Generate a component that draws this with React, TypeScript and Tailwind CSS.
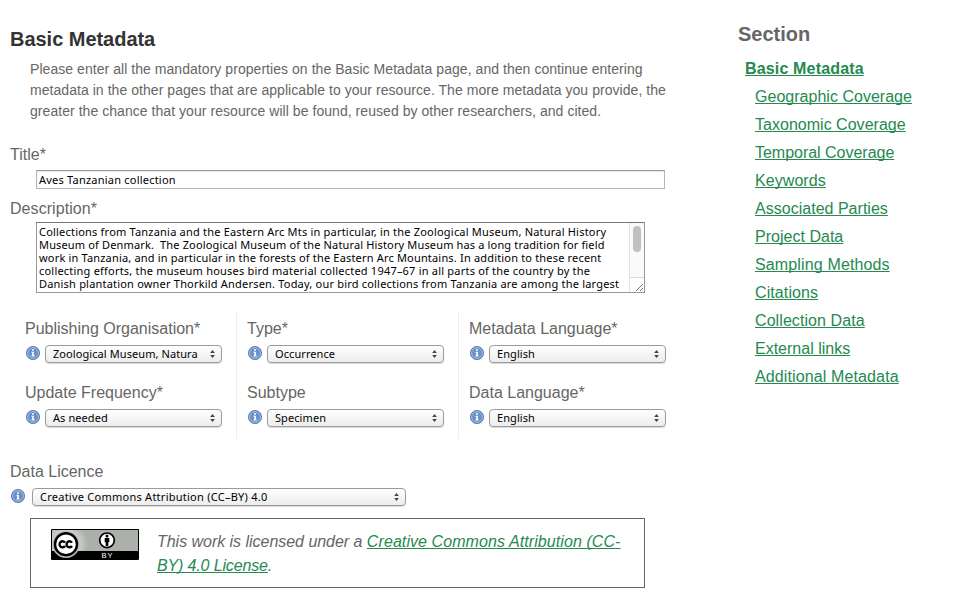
import type { ReactNode } from 'react';

const sections = [
  { name: 'Geographic Coverage', tracking: 'tracking-[0.02px]' },
  { name: 'Taxonomic Coverage', tracking: 'tracking-[0.02px]' },
  { name: 'Temporal Coverage', tracking: 'tracking-[-0.02px]' },
  { name: 'Keywords', tracking: 'tracking-[0.07px]' },
  { name: 'Associated Parties', tracking: 'tracking-[0.02px]' },
  { name: 'Project Data', tracking: 'tracking-[0.02px]' },
  { name: 'Sampling Methods', tracking: 'tracking-[0.14px]' },
  { name: 'Citations', tracking: 'tracking-[0.1px]' },
  { name: 'Collection Data', tracking: 'tracking-[0.08px]' },
  { name: 'External links', tracking: 'tracking-normal' },
  { name: 'Additional Metadata', tracking: 'tracking-[0.12px]' },
];

const description = [
  { text: 'Collections from Tanzania and the Eastern Arc Mts in particular, in the Zoological Museum, Natural History', tracking: 'tracking-[0.205px]' },
  { text: 'Museum of Denmark.  The Zoological Museum of the Natural History Museum has a long tradition for field', tracking: 'tracking-[0.15px]' },
  { text: 'work in Tanzania, and in particular in the forests of the Eastern Arc Mountains. In addition to these recent', tracking: 'tracking-[0.18px]' },
  { text: 'collecting efforts, the museum houses bird material collected 1947–67 in all parts of the country by the', tracking: 'tracking-[0.21px]' },
  { text: 'Danish plantation owner Thorkild Andersen. Today, our bird collections from Tanzania are among the largest', tracking: 'tracking-[0.197px]' },
];

const link = 'text-[#258950] underline decoration-1 underline-offset-1 [text-decoration-skip-ink:none]';

function InfoIcon() {
  return (
    <svg className="block size-[14px] shrink-0" viewBox="0 0 14 14">
      <circle cx="7" cy="7" r="6.6" fill="#6990c8" stroke="#5b7aad" strokeWidth="0.9" />
      <circle cx="7" cy="7" r="5.4" fill="none" stroke="#b3c8e6" strokeWidth="0.8" />
      <path d="M6.1 3.2h1.8v1.6H6.1zM5.5 5.7h2.4v3.8h.8v1.1H5.4V9.5h.8V6.8h-.7z" fill="#fff" />
    </svg>
  );
}

function Select({ value, className }: { value: string; className: string }) {
  return (
    <div className={'flex h-[18px] items-center justify-between rounded-[4px] border border-[#9b9b9b] bg-linear-to-b from-white via-[#f5f5f5] to-[#ededed] pr-[6px] pl-[7px] shadow-[0_1px_1px_rgba(0,0,0,0.15)] ' + className}>
      <span className="font-['Noto_Sans',sans-serif] text-[11px] leading-[16px] whitespace-pre text-black">{value}</span>
      <svg className="h-[8px] w-[5px]" viewBox="0 0 5 8"><path d="M2.5 0L4.8 3H.2zM2.5 8L4.8 5H.2z" fill="#444" /></svg>
    </div>
  );
}

function Field({ label, value }: { label: string; value: string }) {
  return (
    <div className="h-[64px]">
      <div className="text-[16px] leading-[20px] whitespace-pre">{label}</div>
      <div className="mt-[6px] flex gap-[5px] pl-px">
        <div className="pt-px"><InfoIcon /></div>
        <Select value={value} className="w-[177px] tracking-[0.08px]" />
      </div>
    </div>
  );
}

function Column({ children, className }: { children: ReactNode; className: string }) {
  return <div className={'h-[128px] pt-2 ' + className}>{children}</div>;
}

function Badge() {
  return (
    <svg className="block h-[31px] w-[88px] shrink-0" viewBox="0 0 88 31">
      <defs>
        <radialGradient id="glow" gradientUnits="userSpaceOnUse" cx="15" cy="15" r="22">
          <stop offset="0.5" stopColor="#d4d7d3" />
          <stop offset="1" stopColor="#abb0aa" />
        </radialGradient>
      </defs>
      <rect width="88" height="31" rx="1" fill="#000" />
      <rect x="1" y="1" width="86" height="21" fill="url(#glow)" />
      <circle cx="15" cy="15.5" r="13.6" fill="#b9beb8" />
      <circle cx="15" cy="15.2" r="11" fill="#fff" stroke="#000" strokeWidth="2.4" />
      <path d="M14 13.6A3 3 0 1 0 14 17M21 13.6A3 3 0 1 0 21 17" fill="none" stroke="#000" strokeWidth="2.4" />
      <circle cx="56" cy="11.3" r="7.3" fill="#fff" stroke="#000" strokeWidth="1.7" />
      <circle cx="56" cy="6.9" r="1.5" />
      <path d="M53.7 9h4.6v4.3h-1V17h-2.6v-3.7h-1z" />
      <text x="50.5" y="29" fill="#fff" fontFamily="Liberation Sans" fontSize="7.5" textLength="11">BY</text>
    </svg>
  );
}

export default function App() {
  return (
    <div className="flex h-[616px] w-[960px] overflow-hidden bg-white font-['Liberation_Sans',Arial,sans-serif] text-[#666]">
      <main className="w-[738px] pt-[27px] pl-[10px]">
        <h1 className="text-[20px] leading-[24px] font-bold tracking-[-0.03px] text-[#333]">Basic Metadata</h1>
        <div className="mt-2 pl-5 text-[14px] leading-[21px] tracking-[0.05px] whitespace-pre">
          <div>Please enter all the mandatory properties on the Basic Metadata page, and then continue entering</div>
          <div>metadata in the other pages that are applicable to your resource. The more metadata you provide, the</div>
          <div>greater the chance that your resource will be found, reused by other researchers, and cited.</div>
        </div>
        <div className="mt-[23px] text-[16px] leading-[20px]">Title*</div>
        <div className="mt-[5px] ml-[26px] flex h-[19px] w-[629px] items-center border border-[#b5b5b5] border-t-[#999] pl-[2px] shadow-[inset_0_1px_1px_#e8e8e8]">
          <span className="font-['Noto_Sans',sans-serif] text-[11px] leading-[17px] tracking-[0.22px] text-black">Aves Tanzanian collection</span>
        </div>
        <div className="mt-[10px] text-[16px] leading-[20px] tracking-[0.06px]">Description*</div>
        <div className="mt-[3px] ml-[26px] flex h-[71px] w-[609px] overflow-hidden border border-[#999] border-t-[#757575]">
          <div className="w-[592px] pt-[2px] pl-[2px] font-['Noto_Sans',sans-serif] text-[11px] leading-[13px] whitespace-pre text-black">
            {description.map((l) => <div key={l.text} className={l.tracking}>{l.text}</div>)}
          </div>
          <div className="w-[15px] border-l border-[#e2e2e2] bg-[#fafafa]">
            <div className="flex h-[55px] justify-center border-b border-[#d8d8d8] pt-[3px]"><div className="h-[26px] w-[8px] rounded-full bg-[#c1c1c1]" /></div>
            <svg className="block h-[14px] w-[14px] bg-white" viewBox="0 0 14 14"><path d="M6 13L13 6M10 13L13 10" stroke="#777" fill="none" /></svg>
          </div>
        </div>
        <div className="mt-[18px] flex">
          <Column className="w-[226px] pl-[15px]">
            <Field label="Publishing Organisation*" value="Zoological Museum, Natura" />
            <Field label="Update Frequency*" value="As needed" />
          </Column>
          <Column className="w-[222px] border-l border-[#eee] pl-[10px]">
            <Field label="Type*" value="Occurrence" />
            <Field label="Subtype" value="Specimen" />
          </Column>
          <Column className="w-[222px] border-l border-[#eee] pl-[10px]">
            <Field label="Metadata Language*" value="English" />
            <Field label="Data Language*" value="English" />
          </Column>
        </div>
        <div className="mt-[23px] text-[16px] leading-[20px]">Data Licence</div>
        <div className="mt-[6px] flex gap-[7px] pl-px">
          <div className="pt-px"><InfoIcon /></div>
          <Select value="Creative Commons Attribution (CC–BY) 4.0" className="w-[374px] tracking-[0.25px]" />
        </div>
        <div className="mt-[12px] ml-[20px] flex h-[70px] w-[615px] border border-[#666] pt-[10px] pl-[20px]">
          <Badge />
          <div className="ml-[18px] pt-px text-[16px] leading-[24px] whitespace-pre italic">
            <div><span className="tracking-[-0.03px]">This work is licensed under a </span><a className={link + ' tracking-[0.08px]'}>Creative Commons Attribution (CC-</a></div>
            <div className="tracking-[-0.14px]"><a className={link}>BY) 4.0 License</a>.</div>
          </div>
        </div>
      </main>
      <aside className="w-[222px] pt-[22px]">
        <h2 className="text-[20px] leading-[24px] font-bold">Section</h2>
        <nav className="mt-[9px] flex flex-col items-start pl-[17px] text-[16px] leading-[28px]">
          <a className={link + ' -ml-[10px] font-bold tracking-[0.16px]'}>Basic Metadata</a>
          {sections.map((s) => <a key={s.name} className={link + ' ' + s.tracking}>{s.name}</a>)}
        </nav>
      </aside>
    </div>
  );
}
